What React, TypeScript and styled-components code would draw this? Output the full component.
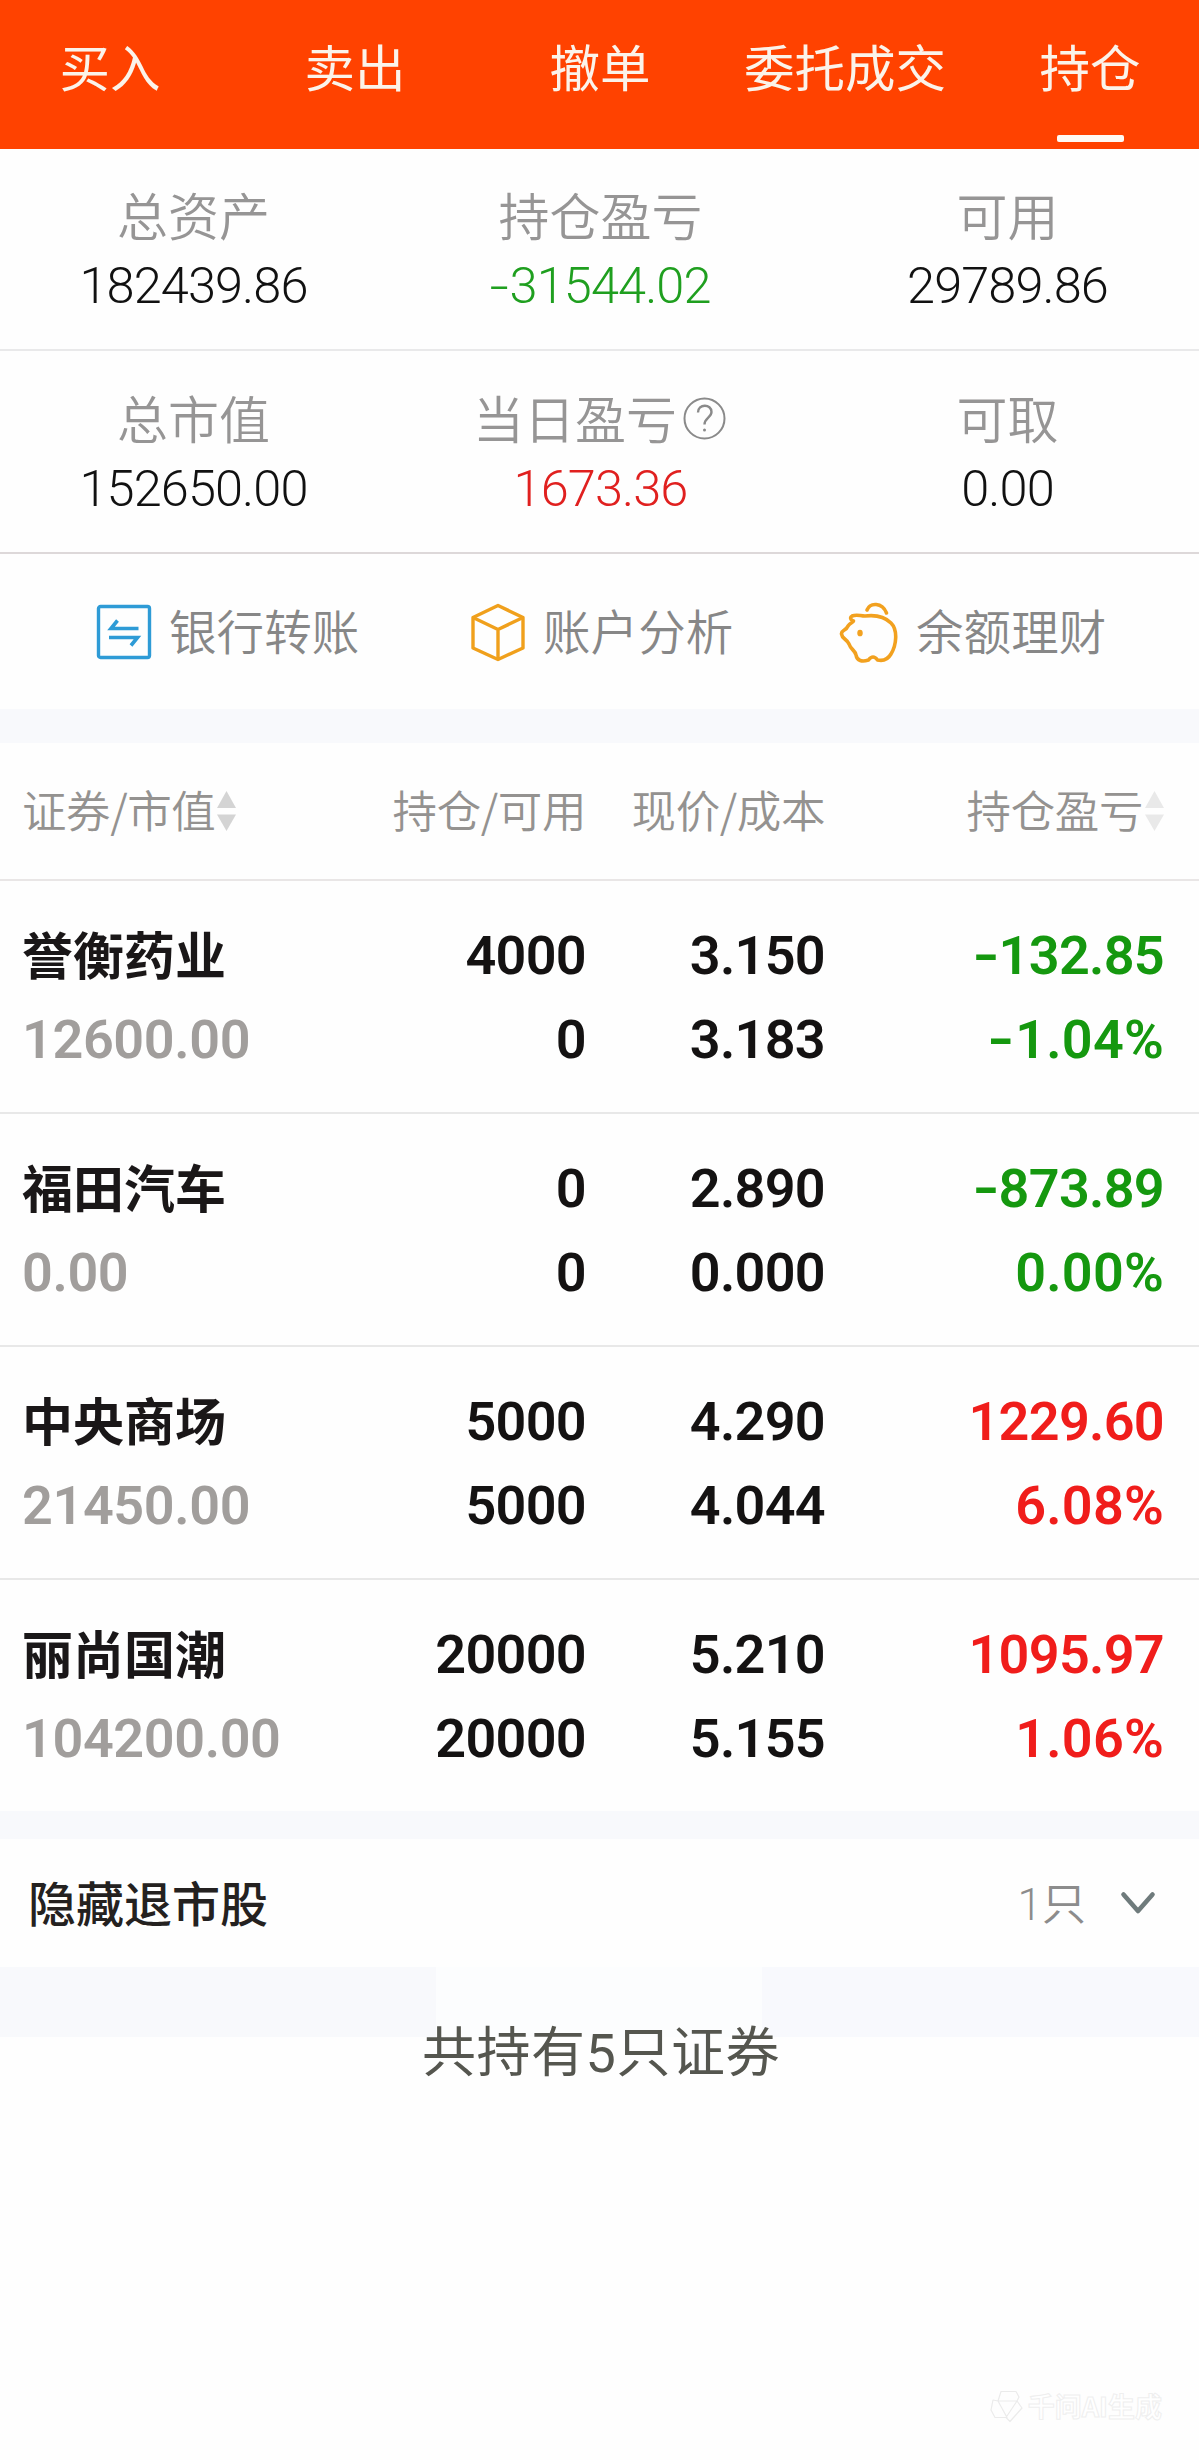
import React from 'react';
import styled, { createGlobalStyle } from 'styled-components';

const CJK = "'Noto Sans CJK SC', sans-serif";
const NUM = "Roboto, 'Noto Sans CJK SC', sans-serif";

const GlobalStyle = createGlobalStyle`
  *, *::before, *::after { box-sizing: border-box; }
  body {
    margin: 0;
    background: #fefefe;
    font-family: ${CJK};
    overflow-x: hidden;
  }
`;

const Page = styled.main`
  display: flex;
  flex-direction: column;
  width: 1199px;
  height: 2460px;
  overflow: hidden;
  background: #fefefe;
`;

const TabBar = styled.nav`
  display: grid;
  grid-template-columns: repeat(5, 245px);
  justify-content: center;
  flex: none;
  height: 149px;
  padding-left: 1px;
  background: #ff4200;
`;

const Tab = styled.a`
  display: flex;
  flex-direction: column;
  align-items: center;
  padding-top: 28px;
  color: #fbf3ea;
  font-size: 50.5px;
  line-height: 74px;
  white-space: nowrap;
`;

const TabMark = styled.span`
  width: 67px;
  height: 7px;
  margin-top: 33px;
  border-radius: 2px;
  background: #fffaf5;
`;

const SummaryRow = styled.section<{ $line: string; $height: number }>`
  display: grid;
  grid-template-columns: 407px 407px 407px;
  justify-content: center;
  flex: none;
  height: ${(p) => p.$height}px;
  padding: ${(p) => p.$height - 172}px 0 0 2px;
  border-bottom: 2px solid ${(p) => p.$line};
`;

const SummaryCell = styled.div`
  display: flex;
  flex-direction: column;
  align-items: center;
`;

const SummaryLabel = styled.div`
  display: flex;
  align-items: center;
  gap: 6px;
  height: 74px;
  padding-bottom: 4px;
  color: #969595;
  font-size: 51px;
  font-weight: 350;
  line-height: 70px;

  svg { margin: 3px 2px 0 0; }
`;

const SummaryValue = styled.div<{ $color?: string }>`
  height: 66px;
  color: ${(p) => p.$color ?? '#111'};
  font-family: ${NUM};
  font-size: 50.5px;
  font-weight: 350;
  letter-spacing: -0.9px;
  line-height: 66px;
`;

const Minus = styled.span`
  display: inline-block;
  margin: 0 0.07em 0 0.04em;
  transform: scaleX(1.35);
`;

const Actions = styled.section`
  display: grid;
  grid-template-columns: 374px 369px 1fr;
  flex: none;
  height: 155px;
  padding: 0 0 0 95px;
`;

const Action = styled.div`
  display: flex;
  align-items: center;
  gap: 16px;
  height: 156px;
  color: #878787;
  font-size: 47.5px;
  font-weight: 350;
  letter-spacing: 0.1px;
  white-space: nowrap;
`;

const Caption = styled.span`
  padding-bottom: 5px;
`;

const Band = styled.div<{ $height: number }>`
  flex: none;
  height: ${(p) => p.$height}px;
  background: #f8f9fc;
`;

const GridRow = styled.div`
  display: grid;
  grid-template-columns: 300px 264px 239px 1fr;
  flex: none;
  padding: 0 35px 0 22px;
`;

const HeadRow = styled(GridRow)`
  height: 138px;
  align-items: center;
  border-bottom: 2px solid #e9e6e6;
`;

const HeadCell = styled.div<{ $right?: boolean }>`
  display: flex;
  align-items: center;
  justify-content: ${(p) => (p.$right ? 'flex-end' : 'flex-start')};
  gap: 2px;
  color: #949290;
  font-size: 44.5px;
  font-weight: 350;
  letter-spacing: -0.4px;
  white-space: nowrap;
`;

const HoldingRow = styled(GridRow)<{ $last?: boolean }>`
  height: ${(p) => (p.$last ? 231 : 233)}px;
  padding-top: 33px;
  border-bottom: ${(p) => (p.$last ? 'none' : '2px solid #e8e8e8')};
`;

const Pair = styled.div<{ $right?: boolean; $color?: string }>`
  display: flex;
  flex-direction: column;
  align-items: ${(p) => (p.$right ? 'flex-end' : 'flex-start')};
  color: ${(p) => p.$color ?? '#141212'};
`;

const StockName = styled.div`
  height: 84px;
  color: #1a1718;
  font-size: 51px;
  font-weight: 600;
  line-height: 78px;
  white-space: nowrap;
`;

const Figure = styled.div<{ $muted?: boolean; $tracking?: number }>`
  height: 84px;
  color: ${(p) => (p.$muted ? '#a19e9c' : 'inherit')};
  font-family: ${NUM};
  font-size: 54px;
  font-weight: 650;
  letter-spacing: ${(p) => p.$tracking ?? -0.7}px;
  line-height: 83px;
  white-space: nowrap;
`;

const HiddenRow = styled.div`
  display: flex;
  align-items: center;
  justify-content: space-between;
  flex: none;
  height: 128px;
  padding: 0 43px 0 28px;
`;

const HiddenTitle = styled.div`
  padding-bottom: 4px;
  color: #242120;
  font-size: 48px;
  font-weight: 500;
`;

const HiddenCount = styled.div`
  display: flex;
  align-items: center;
  gap: 34px;
  color: #8c8c8c;
  font-family: ${NUM};
  font-size: 44px;
  font-weight: 350;
`;

const Footer = styled.footer`
  display: flex;
  justify-content: center;
  flex: none;
  height: 140px;
  padding: 47px 0 0 3px;
  background: linear-gradient(90deg, #f8f9fc 436px, #fcfdfe 436px 762px, #f8f9fd 762px) 0 0 / 100% 70px no-repeat;
  color: #55564f;
  font-family: ${NUM};
  font-size: 54px;
  line-height: 80px;
  letter-spacing: 0.5px;
`;

const Watermark = styled.div`
  display: flex;
  align-items: center;
  justify-content: flex-end;
  gap: 5px;
  margin-top: auto;
  padding: 0 37px 31px 0;
  color: #fff;
  font-size: 27px;
  font-weight: 700;
  line-height: 46px;
  -webkit-text-stroke: 1px #efefef;
`;

const HelpIcon = () => (
  <svg width="43" height="43" viewBox="0 0 43 43" fill="none" stroke="#8a8a8a" strokeWidth="2">
    <circle cx="21.5" cy="21.5" r="20" />
    <path d="M15 15.500C15 6.500 28.500 6.500 28.500 15C28.500 20.500 21.500 21 21.500 27.500" strokeWidth="2.400" />
    <circle cx="21.500" cy="33" r="1.500" fill="#8a8a8a" stroke="none" />
  </svg>
);

const TransferIcon = () => (
  <svg width="58" height="58" viewBox="0 0 58 58" fill="none" stroke="#2e9bd6" strokeWidth="3.400">
    <rect x="3.500" y="3.500" width="51" height="51" rx="2" />
    <path d="M43.500 25.500H16L22.500 17.500" strokeWidth="3.600" />
    <path d="M14 34.500H42.500L36 42.500" strokeWidth="3.600" />
  </svg>
);

const CubeIcon = () => (
  <svg width="58" height="60" viewBox="0 0 58 60" fill="none" stroke="#f0a01c" strokeWidth="3.400" strokeLinejoin="round">
    <path d="M29 3.500L54 15.500V46L29 57.500L4 46V15.500Z" />
    <path d="M4 15.500L29 27.500L54 15.500M29 27.500V57" />
  </svg>
);

const PigIcon = () => (
  <svg width="62" height="62" viewBox="0 0 62 62" fill="none" stroke="#f2a11f" strokeWidth="3.600" strokeLinecap="round" strokeLinejoin="round">
    <path d="M14 15C19 13 22 15 27 15C39 13.500 47 16 53 22C60 29 58.500 44 53 53C49 60 44 60 39.500 59C36.500 55 33.500 55 30.500 59C24 61 19 60 18 54C17 49 13 49 11 43C9 38 4 38 3.500 33C3 29 8 30 10 25C12 22 16 21 15.500 20C12 19 12 16 14 15Z" />
    <path d="M29 9C32 1.500 44 1 48.500 12" />
    <ellipse cx="22" cy="32" rx="2" ry="2.600" fill="#f2a11f" strokeWidth="1.500" />
  </svg>
);

const SortIcon = ({ color }: { color: string }) => (
  <svg width="19" height="40" viewBox="0 0 19 40" fill={color}>
    <path d="M9.500 0L19 17H0Z" />
    <path d="M0 23.500H19L9.500 40Z" />
  </svg>
);

const ChevronIcon = () => (
  <svg width="36" height="24" viewBox="0 0 36 24" fill="none" stroke="#6f7b7c" strokeWidth="4.600" strokeLinecap="round" strokeLinejoin="round">
    <path d="M3.500 3.500L18 20L32.500 3.500" />
  </svg>
);

const WatermarkIcon = () => (
  <svg width="33" height="33" viewBox="0 0 33 33" fill="none" stroke="#ebebeb" strokeWidth="1.200" strokeLinejoin="round">
    <path d="M8 11L11 1.500H26L29 7L27 11ZM8 11L17 27.500H5L1 20L3 10ZM27 11L32 18L20 31.500L16 27.500Z" />
  </svg>
);

const Signed = ({ value }: { value: string }) =>
  value.startsWith('-') ? (
    <>
      <Minus>-</Minus>
      {value.slice(1)}
    </>
  ) : (
    <>{value}</>
  );

const tabs = ['买入', '卖出', '撤单', '委托成交', '持仓'];

const GREEN = '#15980f';
const RED = '#f01d1b';

const holdings = [
  { name: '誉衡药业', worth: '12600.00', held: '4000', free: '0', price: '3.150', cost: '3.183', gain: '-132.85', rate: '-1.04%', color: GREEN },
  { name: '福田汽车', worth: '0.00', held: '0', free: '0', price: '2.890', cost: '0.000', gain: '-873.89', rate: '0.00%', color: GREEN },
  { name: '中央商场', worth: '21450.00', held: '5000', free: '5000', price: '4.290', cost: '4.044', gain: '1229.60', rate: '6.08%', color: RED },
  { name: '丽尚国潮', worth: '104200.00', held: '20000', free: '20000', price: '5.210', cost: '5.155', gain: '1095.97', rate: '1.06%', color: RED },
];

export default function App() {
  return (
    <Page>
      <GlobalStyle />
      <TabBar>
        {tabs.map((t) => (
          <Tab key={t}>
            {t}
            {t === '持仓' && <TabMark />}
          </Tab>
        ))}
      </TabBar>

      <SummaryRow $height={202} $line="#e9e9ea">
        <SummaryCell>
          <SummaryLabel>总资产</SummaryLabel>
          <SummaryValue>182439.86</SummaryValue>
        </SummaryCell>
        <SummaryCell>
          <SummaryLabel>持仓盈亏</SummaryLabel>
          <SummaryValue $color="#1f9f1f"><Signed value="-31544.02" /></SummaryValue>
        </SummaryCell>
        <SummaryCell>
          <SummaryLabel>可用</SummaryLabel>
          <SummaryValue>29789.86</SummaryValue>
        </SummaryCell>
      </SummaryRow>
      <SummaryRow $height={203} $line="#ddd8d9">
        <SummaryCell>
          <SummaryLabel>总市值</SummaryLabel>
          <SummaryValue>152650.00</SummaryValue>
        </SummaryCell>
        <SummaryCell>
          <SummaryLabel>
            当日盈亏
            <HelpIcon />
          </SummaryLabel>
          <SummaryValue $color="#e0201f">1673.36</SummaryValue>
        </SummaryCell>
        <SummaryCell>
          <SummaryLabel>可取</SummaryLabel>
          <SummaryValue>0.00</SummaryValue>
        </SummaryCell>
      </SummaryRow>

      <Actions>
        <Action><TransferIcon /><Caption>银行转账</Caption></Action>
        <Action><CubeIcon /><Caption>账户分析</Caption></Action>
        <Action><PigIcon /><Caption>余额理财</Caption></Action>
      </Actions>

      <Band $height={34} />

      <HeadRow>
        <HeadCell><Caption>证券/市值</Caption><SortIcon color="#d4d4d4" /></HeadCell>
        <HeadCell $right><Caption>持仓/可用</Caption></HeadCell>
        <HeadCell $right><Caption>现价/成本</Caption></HeadCell>
        <HeadCell $right><Caption>持仓盈亏</Caption><SortIcon color="#e9e9e9" /></HeadCell>
      </HeadRow>
      {holdings.map((h, i) => (
        <HoldingRow key={h.name} $last={i === holdings.length - 1}>
          <Pair>
            <StockName>{h.name}</StockName>
            <Figure $muted $tracking={-0.4}>{h.worth}</Figure>
          </Pair>
          <Pair $right>
            <Figure>{h.held}</Figure>
            <Figure>{h.free}</Figure>
          </Pair>
          <Pair $right>
            <Figure>{h.price}</Figure>
            <Figure>{h.cost}</Figure>
          </Pair>
          <Pair $right $color={h.color}>
            <Figure><Signed value={h.gain} /></Figure>
            <Figure $tracking={0.2}><Signed value={h.rate} /></Figure>
          </Pair>
        </HoldingRow>
      ))}

      <Band $height={28} />
      <HiddenRow>
        <HiddenTitle>隐藏退市股</HiddenTitle>
        <HiddenCount><Caption>1只</Caption><ChevronIcon /></HiddenCount>
      </HiddenRow>
      <Footer>共持有5只证券</Footer>
      <Watermark><WatermarkIcon />千问AI生成</Watermark>
    </Page>
  );
}
